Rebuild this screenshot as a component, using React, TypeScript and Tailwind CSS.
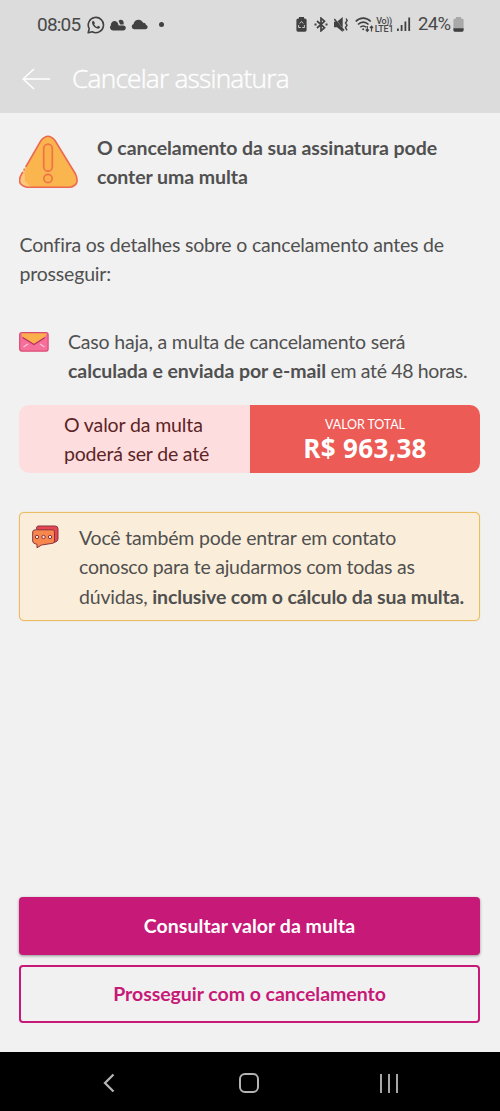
import React from 'react';

function StatusBar() {
    return (
        <div className="flex h-[50px] items-center justify-between pl-[37px] pr-9 font-['Roboto',sans-serif] text-[19px] text-[#484848]">
            <div className="flex items-center">
                <span className="w-[50px] whitespace-nowrap tracking-[-0.8px]">08:05</span>
                {/* WhatsApp */}
                <svg className="h-[18px] w-[18px]" viewBox="0 0 18 18" fill="none">
                    <path d="M1.2 16.800l1-4.100A7.600 7.600 0 1 1 5.200 15.700z" stroke="#414141" strokeWidth="1.600" strokeLinejoin="round" />
                    <path d="M6.400 4.700c-.5 0-1.400.7-1.400 1.900 0 3 3.700 6.200 6.200 6.100 1 0 2-.9 1.900-1.900l-2.100-1.100-1 1.200c-1.200-.4-2.300-1.500-2.800-2.700l.8-1.100z" fill="#414141" />
                </svg>
                {/* Previsão do tempo */}
                <svg className="ml-[5px] h-[12px] w-[16px]" viewBox="0 0 16 12" fill="#414141">
                    <path d="M3 11.500A3 3 0 0 1 .8 6.500C.7 2.600 4.500.8 7 3c1 .9 1 1.700 1.300 2.700.8 1.300 2.200.8 3.300.8h1.700a2.500 2.500 0 0 1 0 5z" />
                    <path d="M8.600 2C10-.2 13.700.6 13.700 4l-.1 1.600h-3C9.500 5.400 9.700 3.500 8.600 2z" />
                </svg>
                <svg className="ml-[5px] h-[11px] w-[17px]" viewBox="0 0 17 11" fill="#414141">
                    <path d="M3 10.200A2.700 2.700 0 0 1 2.500 5C3 2.200 5.300.7 7.500.7c2.300 0 4 1.400 4.700 3.200 1.500-.2 2.500.7 2.700 1.900 2.500.8 2.200 4.400-.5 4.400z" />
                </svg>
                <span className="ml-[11px] h-[5px] w-[5px] rounded-full bg-[#414141]" />
            </div>

            <div className="flex items-center">
                {/* Economia de bateria */}
                <svg className="h-[15px] w-[11px]" viewBox="0 0 11 15">
                    <path d="M3 0h5v1.500h1A1.700 1.700 0 0 1 10.600 3v10A1.700 1.700 0 0 1 9 14.700H2A1.700 1.700 0 0 1 .4 13V3A1.700 1.700 0 0 1 2 1.500h1z" fill="#414141" />
                    <path d="M3.700 6.500l1.800-2 1.800 2M2.700 8l-.2 2.500h2.300M8.300 8l.2 2.500H6.200" fill="none" stroke="#c8c8c8" strokeWidth="1" />
                </svg>
                {/* Bluetooth */}
                <svg className="ml-[7px] h-[15px] w-[14px]" viewBox="0 0 14 15" fill="none" stroke="#414141" strokeWidth="1.700">
                    <path d="M3 4l7.500 6.700L7 13.800V1.200l3.500 3.100L3 11" />
                    <path d="M.5 7.500h2M11.500 7.500h2" strokeWidth="2" />
                </svg>
                {/* Vibração */}
                <svg className="ml-[6px] h-[15px] w-[14px]" viewBox="0 0 14 15" fill="none" stroke="#414141">
                    <path d="M0 4.800h3L8.700 0v15L3 10.200H0z" fill="#414141" stroke="none" />
                    <path d="M0 .8l10.500 12.500" stroke="#dcdcdc" strokeWidth="1" />
                    <path d="M.2 2l9.800 11.500" strokeWidth="1.500" />
                    <path d="M12 1.500l1.200 2L11.500 6l1.500 2.200-1.500 2.300 1.500 2.800" strokeWidth="1.400" />
                </svg>
                {/* Wi-Fi */}
                <svg className="ml-[7px] h-[16px] w-[19px]" viewBox="0 0 19 16" fill="none" stroke="#414141" strokeWidth="1.600">
                    <path d="M.7 4.500c4.300-4.500 10.700-4.500 15 0M3 7.500c3-3.200 7.500-3.200 10.500 0M5.300 10.200c1.600-1.700 4.200-1.700 5.800 0" />
                    <circle cx="8.200" cy="12.300" r="1" fill="#414141" stroke="none" />
                    <path d="M12.300 9v5M10.800 12.500l1.500 1.800 1.500-1.800M16.500 14.500v-5M15 11l1.500-1.800L18 11" strokeWidth="1.200" />
                </svg>
                <span className="flex w-[20px] flex-col items-center whitespace-nowrap text-[9px] font-medium leading-[8px]">
                    <span className="tracking-[-0.4px]">Vo))</span>
                    <span className="tracking-[-0.2px]">LTE1</span>
                </span>
                {/* Sinal */}
                <svg className="ml-[3px] h-[15px] w-[14px]" viewBox="0 0 14 15" fill="#414141">
                    <path d="M0 11.500h1.800V14H0zM3.700 8h1.800v6H3.700zM7.500 4.500h1.800V14H7.500zM11.300.5h1.800V14h-1.800z" />
                </svg>
                <span className="ml-[7px] w-[35px] whitespace-nowrap text-[18.500px] tracking-[-0.7px]">24%</span>
                <svg className="h-[15px] w-[11px]" viewBox="0 0 11 15">
                    <path d="M3 0h5v1.500h1A1.700 1.700 0 0 1 10.600 3v10A1.700 1.700 0 0 1 9 14.700H2A1.700 1.700 0 0 1 .4 13V3A1.700 1.700 0 0 1 2 1.500h1z" fill="#a9a9a9" />
                    <path d="M.4 11.200h10.200V13A1.700 1.700 0 0 1 9 14.700H2A1.700 1.700 0 0 1 .4 13z" fill="#414141" />
                </svg>
            </div>
        </div>
    );
}

function WarningIcon() {
    return (
        <svg className="mt-[15px] h-[54px] w-[60px] shrink-0" viewBox="0 0 60 54" fill="none">
            <path d="M22 5.500Q29-3 36 5.500L56.500 39Q61.500 50 51 52.300H8Q-2.500 50 1.800 40.500z" fill="#fab54f" />
            <path d="M24 4Q15 16 5.500 37L6 46Q9 50 13 52H9Q-2.500 50 1.800 40.500z" fill="#fcc67d" />
            <path d="M7 31.500L22 5.500Q29-3 36 5.500L56.500 39Q61.500 50 51 52.300H8Q-2.500 50 1.800 40.500L3.500 37.500" stroke="#ec6850" strokeWidth="1.600" strokeLinecap="round" />
            <circle cx="5.200" cy="34.500" r=".9" fill="#ec6850" />
            <rect x="24.700" y="9.200" width="8.600" height="27" rx="4.300" fill="#fbb049" stroke="#ee7447" strokeWidth="1.700" />
            <circle cx="29" cy="43.500" r="4.200" fill="#fbb049" stroke="#ee7447" strokeWidth="1.700" />
        </svg>
    );
}

function MailIcon() {
    return (
        <svg className="mt-[5px] h-[20px] w-[30px] shrink-0" viewBox="0 0 30 20" fill="none">
            <rect x=".7" y=".7" width="28.400" height="18.400" rx="2" fill="#f66f9b" />
            <path d="M2 1h26l-2 4-11 7.500L3.500 5z" fill="#fbae4c" />
            <path d="M3.700 5.500L15 12.500 26 5.500" stroke="#b7325d" strokeWidth="1.200" />
            <path d="M4.500 15l4.500-3M21 12l4.500 3" stroke="#fbc6d7" strokeWidth="1.200" />
            <rect x=".7" y=".7" width="28.400" height="18.400" rx="2" stroke="#d94a72" strokeWidth="1.200" />
        </svg>
    );
}

function ChatIcon() {
    return (
        <svg className="h-[24px] w-[27px]" viewBox="0 0 27 24" fill="none" stroke="#87343f" strokeWidth="1">
            <path d="M6 1h17q3 0 3 3v10q0 2-2.500 3L20 18 4.500 4q0-3 1.500-3z" fill="#e84553" />
            <path d="M3.500 4.800h17q2 0 2 2V16q0 2-2 2.300L9.500 20 5 22.800v-3.500l-2-.6Q.7 18 .7 16V7q0-2.200 2.800-2.200z" fill="#f8874d" />
            <g fill="#ffe6d9">
                <circle cx="5" cy="12" r="1.700" />
                <circle cx="11.500" cy="12" r="1.700" />
                <circle cx="18" cy="12" r="1.700" />
            </g>
        </svg>
    );
}

function NavigationBar() {
    return (
        <nav className="flex h-[59px] shrink-0 items-center bg-black pt-[3px]">
            <svg className="ml-[103px] h-5 w-3" viewBox="0 0 12 20" fill="none" stroke="#b3b3b3" strokeWidth="2.300">
                <path d="M10.500 1.500L2 10l8.500 8.500" />
            </svg>
            <span className="ml-[124px] h-5 w-5 rounded-[6px] border-2 border-[#b3b3b3]" />
            <span className="ml-[121px] flex h-[19px] w-[18px] justify-between">
                <span className="w-[2px] bg-[#a6a6a6]" />
                <span className="w-[2px] bg-[#a6a6a6]" />
                <span className="w-[2px] bg-[#a6a6a6]" />
            </span>
        </nav>
    );
}

export default function App() {
    return (
        <div className="flex h-[1111px] w-[500px] flex-col overflow-hidden bg-[#f1f1f1] font-['Lato',sans-serif] text-[19.500px] leading-[29.200px] tracking-[-0.19px] text-[#505050]">
            <header className="h-[113px] shrink-0 bg-[#dcdcdc]">
                <StatusBar />
                <div className="flex h-[57px] items-center pl-[22px]">
                    <svg className="h-[22px] w-[28px]" viewBox="0 0 28 22" fill="none" stroke="#fff" strokeWidth="1.500">
                        <path d="M12 1L1.200 11 12 21M1.200 11H28" />
                    </svg>
                    <h1 className="ml-[22px] mt-px whitespace-nowrap font-['Open_Sans',sans-serif] text-[26.300px] font-light tracking-[-0.8px] text-white [-webkit-text-stroke:0.4px_white]">
                        Cancelar assinatura
                    </h1>
                </div>
            </header>

            <main className="flex flex-1 flex-col px-[19px] pt-[7px]">
                {/* Aviso */}
                <div className="flex">
                    <WarningIcon />
                    <p className="ml-[18px] mt-[13px] whitespace-nowrap font-bold tracking-[-0.06px]">
                        O cancelamento da sua assinatura pode<br />
                        conter uma multa
                    </p>
                </div>

                <p className="mt-[38.500px] whitespace-nowrap pl-[0.500px]">
                    Confira os detalhes sobre o cancelamento antes de<br />
                    prosseguir:
                </p>

                <div className="mt-[38.500px] flex">
                    <MailIcon />
                    <p className="ml-[19px] whitespace-nowrap">
                        Caso haja, a multa de cancelamento será<br />
                        <b className="tracking-[-0.06px]">calculada e enviada por e-mail</b>
                        <span className="tracking-[-0.36px]"> em até 48 horas.</span>
                    </p>
                </div>

                {/* Valor da multa */}
                <div className="mt-[20px] flex h-[68px] w-[461px] shrink-0 overflow-hidden rounded-[10px]">
                    <div className="flex w-[231px] items-center bg-[#fddddd] pl-[45px] text-[#5c2426]">
                        <p className="whitespace-nowrap">
                            <span className="tracking-[-0.13px]">O valor da multa</span><br />
                            poderá ser de até
                        </p>
                    </div>
                    <div className="flex flex-1 flex-col items-center bg-[#ec5b56] pt-[11px] text-white">
                        <span className="text-[12.500px] leading-[18px] tracking-[-0.1px]">VALOR TOTAL</span>
                        <span className="whitespace-nowrap font-['Open_Sans',sans-serif] text-[26px] font-bold leading-[29px] tracking-[0.35px]">
                            R$ 963,38
                        </span>
                    </div>
                </div>

                {/* Contato */}
                <div className="mt-[39px] flex h-[109px] w-[461px] shrink-0 rounded-[5px] border border-[#ecbc62] bg-[#faeeda] pl-[12px] pt-[10px] shadow-[0_0_1px_#ecbc62]">
                    <div className="mt-[2px] w-[47px] shrink-0">
                        <ChatIcon />
                    </div>
                    <p className="whitespace-nowrap">
                        Você também pode entrar em contato<br />
                        <span className="tracking-[-0.25px]">conosco para te ajudarmos com todas as</span><br />
                        dúvidas, <b className="tracking-[-0.13px]">inclusive com o cálculo da sua multa.</b>
                    </p>
                </div>

                {/* Botões */}
                <div className="mb-[29px] mt-auto flex w-[461px] flex-col gap-[10px]">
                    <button
                        type="button"
                        className="h-[58px] rounded-[4px] bg-[#c71977] font-bold tracking-[0.05px] text-white shadow-[0_1px_3px_rgba(0,0,0,0.4)]"
                    >
                        Consultar valor da multa
                    </button>
                    <button
                        type="button"
                        className="h-[58px] rounded-[4px] border-2 border-[#c71977] font-bold tracking-[-0.03px] text-[#c71977]"
                    >
                        Prosseguir com o cancelamento
                    </button>
                </div>
            </main>

            <NavigationBar />
        </div>
    );
}
